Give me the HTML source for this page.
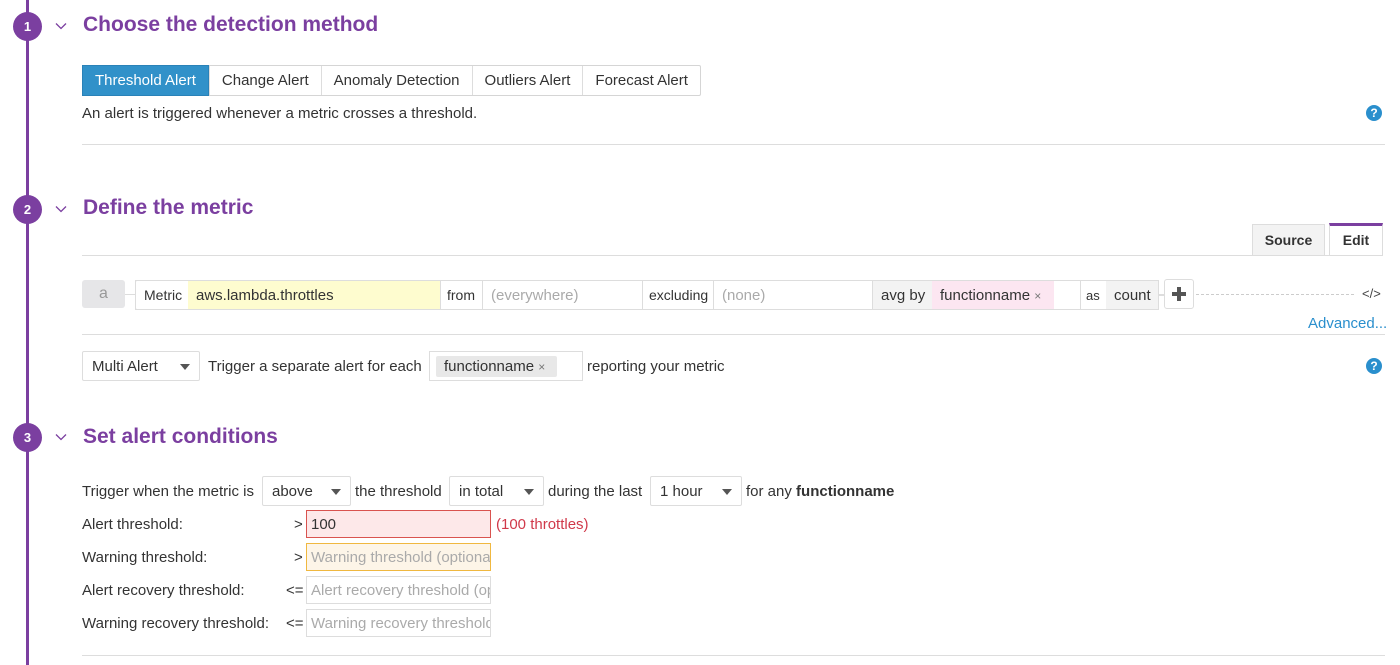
<!DOCTYPE html>
<html><head><meta charset="utf-8">
<style>
*{box-sizing:border-box;margin:0;padding:0}
body{width:1400px;height:665px;background:#fff;font-family:"Liberation Sans",sans-serif;font-size:15px;color:#333;position:relative;overflow:hidden}
.a{position:absolute;white-space:nowrap}
.vline{position:absolute;left:26px;top:0;width:3px;height:665px;background:#7b3fa0}
.num{position:absolute;left:13px;width:29px;height:29px;border-radius:50%;background:#7b3fa0;color:#fff;font-weight:bold;font-size:13px;text-align:center;line-height:29px}
.chev{position:absolute;left:55px;width:12px;height:12px}
.h{position:absolute;left:83px;font-size:21px;font-weight:bold;color:#7b3fa0;white-space:nowrap}
.hr{position:absolute;left:82px;right:15px;height:1px;background:#ddd}
.btns{position:absolute;left:82px;top:65px;height:31px;display:flex;border:1px solid #d5d5d5;border-radius:2px}
.btns div{padding:0 12px;line-height:30px;border-left:1px solid #ddd;color:#333}
.btns div:first-child{background:#3191c9;color:#fff;border:1px solid #2a82b8;margin:-1px 0 -1px -1px;line-height:29px}
.help{position:absolute;width:16px;height:16px;border-radius:50%;background:#2a8fcd;color:#fff;font-weight:bold;font-size:12px;text-align:center;line-height:16px}
.seg{position:absolute;top:280px;height:30px;line-height:29px;border-top:1px solid #ddd;border-bottom:1px solid #ddd;padding-left:8px;white-space:nowrap}
.sel{position:absolute;height:30px;border:1px solid #ddd;border-radius:2px;line-height:30px;padding-left:9px;background:#fff;white-space:nowrap}
.sel:after{content:"";position:absolute;right:9px;top:12px;border-left:5px solid transparent;border-right:5px solid transparent;border-top:6px solid #555}
.inp{position:absolute;left:306px;width:185px;height:28px;border:1px solid #ddd;line-height:28px;padding-left:4px;color:#aaa;overflow:hidden;white-space:nowrap}
</style></head><body>
<div class="vline"></div>

<div class="num" style="top:12px">1</div>
<svg class="chev" style="top:20px" viewBox="0 0 12 12"><path d="M1 3.5l5 5 5-5" fill="none" stroke="#7b3fa0" stroke-width="1.3"/></svg>
<div class="h" style="top:13px">Choose the detection method</div>
<div class="btns"><div>Threshold Alert</div><div>Change Alert</div><div>Anomaly Detection</div><div>Outliers Alert</div><div>Forecast Alert</div></div>
<div class="a" style="left:82px;top:105px">An alert is triggered whenever a metric crosses a threshold.</div>
<div class="help" style="left:1366px;top:105px">?</div>
<div class="hr" style="top:144px"></div>

<div class="num" style="top:195px">2</div>
<svg class="chev" style="top:203px" viewBox="0 0 12 12"><path d="M1 3.5l5 5 5-5" fill="none" stroke="#7b3fa0" stroke-width="1.3"/></svg>
<div class="h" style="top:196px">Define the metric</div>
<div class="a" style="left:1252px;top:224px;width:73px;height:32px;background:#f3f3f3;border:1px solid #ddd;border-bottom:none;text-align:center;line-height:31px;font-weight:bold;font-size:14px">Source</div>
<div class="a" style="left:1329px;top:223px;width:54px;height:33px;background:#fff;border:1px solid #ddd;border-top:3px solid #7b3fa0;border-bottom:none;text-align:center;line-height:29px;font-weight:bold;font-size:14px">Edit</div>
<div class="hr" style="top:255px;right:17px"></div>

<div class="a" style="left:82px;top:280px;width:43px;height:28px;background:#e6e6e8;border-radius:3px;color:#999;text-align:center;line-height:28px;font-size:16px">a</div>
<div class="a" style="left:125px;top:294px;width:10px;height:1px;background:#ddd"></div>
<div class="a" style="left:135px;top:280px;width:1024px;height:30px;border:1px solid #ddd;border-radius:2px"></div>
<div class="seg" style="left:135px;width:53px;font-size:14px;border-left:1px solid #ddd">Metric</div>
<div class="seg" style="left:188px;width:252px;background:#fefccf">aws.lambda.throttles</div>
<div class="seg" style="left:440px;width:43px;font-size:14px;border-left:1px solid #ddd;border-right:1px solid #ddd;padding-left:6px">from</div>
<div class="seg" style="left:483px;width:159px;color:#aaa">(everywhere)</div>
<div class="seg" style="left:642px;width:72px;font-size:14px;border-left:1px solid #ddd;border-right:1px solid #ddd;padding-left:6px">excluding</div>
<div class="seg" style="left:714px;width:158px;color:#aaa">(none)</div>
<div class="seg" style="left:872px;width:60px;background:#f3f3f3;border-left:1px solid #ddd">avg by</div>
<div class="seg" style="left:932px;width:122px;background:#fce6f1">functionname <span style="color:#777;font-size:12px">×</span></div>
<div class="seg" style="left:1054px;width:26px"></div>
<div class="seg" style="left:1080px;width:26px;font-size:13px;border-left:1px solid #ddd;padding-left:5px">as</div>
<div class="seg" style="left:1106px;width:53px;background:#f3f3f3;border-right:1px solid #ddd">count</div>
<div class="a" style="left:1159px;top:294px;width:5px;height:2px;background:#ddd"></div>
<div class="a" style="left:1164px;top:279px;width:30px;height:30px;border:1px solid #ddd;border-radius:3px;background:#fff"></div>
<div class="a" style="left:1172px;top:292px;width:14px;height:4px;background:#555"></div>
<div class="a" style="left:1177px;top:287px;width:4px;height:14px;background:#555"></div>
<div class="a" style="left:1196px;top:294px;width:158px;border-top:1px dashed #ccc"></div>
<div class="a" style="left:1362px;top:286px;font-size:13px;color:#444">&lt;/&gt;</div>
<div class="a" style="left:1308px;top:315px;color:#2a8fcd">Advanced...</div>
<div class="hr" style="top:334px"></div>

<div class="sel" style="left:82px;top:351px;width:118px">Multi Alert</div>
<div class="a" style="left:208px;top:358px">Trigger a separate alert for each</div>
<div class="a" style="left:429px;top:351px;width:154px;height:30px;border:1px solid #ddd"></div>
<div class="a" style="left:436px;top:356px;width:121px;height:21px;background:#e8e8e8;border-radius:2px;line-height:21px;padding-left:8px">functionname <span style="color:#777;font-size:12px">×</span></div>
<div class="a" style="left:587px;top:358px">reporting your metric</div>
<div class="help" style="left:1366px;top:358px">?</div>

<div class="num" style="top:423px">3</div>
<svg class="chev" style="top:431px" viewBox="0 0 12 12"><path d="M1 3.5l5 5 5-5" fill="none" stroke="#7b3fa0" stroke-width="1.3"/></svg>
<div class="h" style="top:425px">Set alert conditions</div>

<div class="a" style="left:82px;top:483px">Trigger when the metric is</div>
<div class="sel" style="left:262px;top:476px;width:89px">above</div>
<div class="a" style="left:355px;top:483px">the threshold</div>
<div class="sel" style="left:449px;top:476px;width:95px">in total</div>
<div class="a" style="left:548px;top:483px">during the last</div>
<div class="sel" style="left:650px;top:476px;width:92px">1 hour</div>
<div class="a" style="left:746px;top:483px">for any <b>functionname</b></div>

<div class="a" style="left:82px;top:516px">Alert threshold:</div>
<div class="a" style="left:294px;top:516px">&gt;</div>
<div class="inp" style="top:510px;background:#fde8e9;border-color:#d9534f;color:#333">100</div>
<div class="a" style="left:496px;top:516px;color:#d0394a">(100 throttles)</div>

<div class="a" style="left:82px;top:549px">Warning threshold:</div>
<div class="a" style="left:294px;top:549px">&gt;</div>
<div class="inp" style="top:543px;background:#fdf5e8;border-color:#f0b840">Warning threshold (optional)</div>

<div class="a" style="left:82px;top:582px">Alert recovery threshold:</div>
<div class="a" style="left:286px;top:582px">&lt;=</div>
<div class="inp" style="top:576px">Alert recovery threshold (optional)</div>

<div class="a" style="left:82px;top:615px">Warning recovery threshold:</div>
<div class="a" style="left:286px;top:615px">&lt;=</div>
<div class="inp" style="top:609px">Warning recovery threshold</div>

<div class="hr" style="top:655px"></div>
</body></html>
